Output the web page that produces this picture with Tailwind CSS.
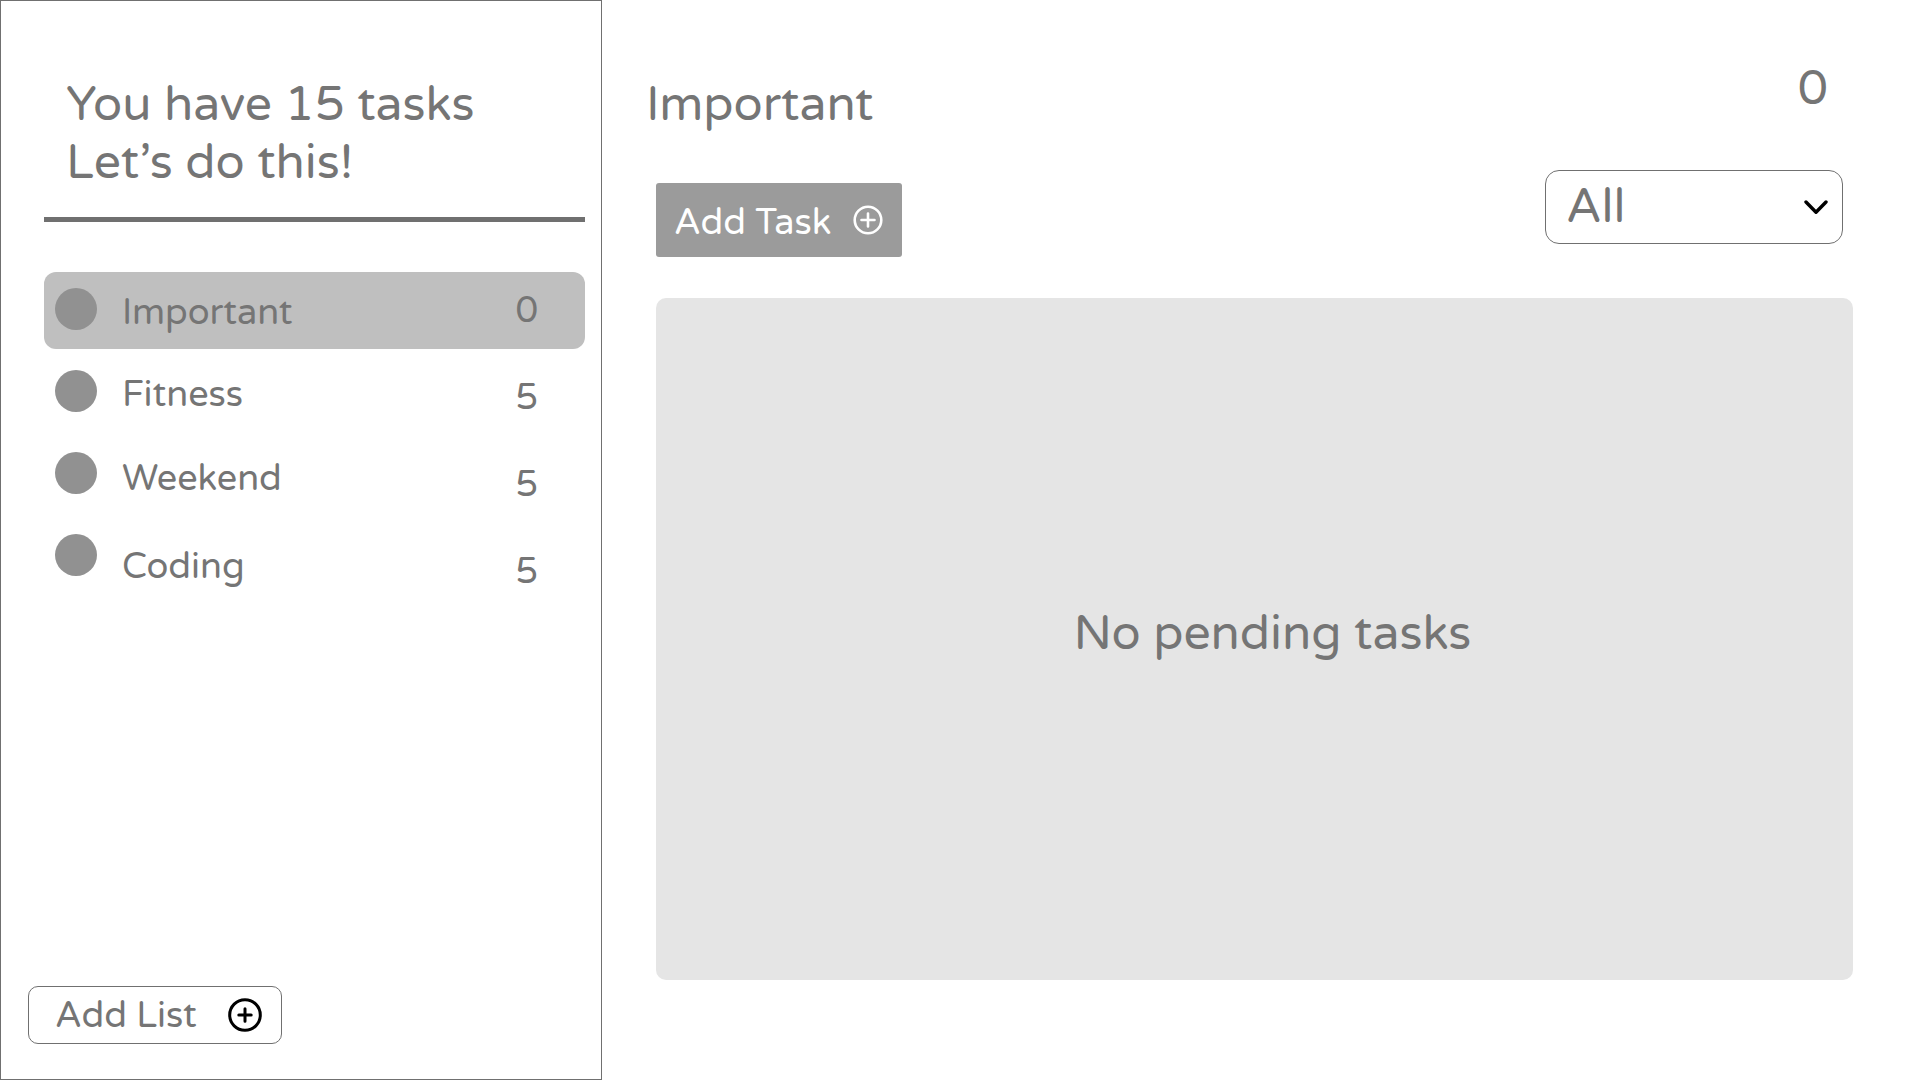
<!DOCTYPE html>
<html lang="en">
<head>
<meta charset="utf-8">
<meta name="viewport" content="width=device-width, initial-scale=1">
<title>Tasks</title>
<script src="https://cdn.jsdelivr.net/npm/@tailwindcss/browser@4"></script>
</head>
<body class="flex min-h-screen bg-white font-['Varela_Round','Noto_Sans',sans-serif] text-[#757575]">
  <aside class="flex w-[602px] shrink-0 flex-col border border-[#707070] pt-[75px] pb-[35px]">
    <p class="pl-[65px] text-5xl/[58px]">You have 15 tasks<br>Let’s do this!</p>
    <hr class="mt-[25px] mr-4 ml-[43px] h-[5px] border-0 bg-[#707070]">
    <ul class="mt-[50px] mr-4 ml-[43px] flex flex-col gap-[5px] text-4xl/[48px]">
      <li><a href="#important" class="flex h-[77px] items-start rounded-xl bg-[#bfbfbf] pr-[47px] pl-[11px]">
        <span class="mt-4 size-[42px] rounded-full bg-[#919191]"></span>
        <span class="ml-[25px] pt-[17px]">Important</span>
        <span class="ml-auto pt-[15px]">0</span>
      </a></li>
      <li><a href="#fitness" class="flex h-[77px] items-start pr-[47px] pl-[11px]">
        <span class="mt-4 size-[42px] rounded-full bg-[#919191]"></span>
        <span class="ml-[25px] pt-[17px]">Fitness</span>
        <span class="ml-auto pt-5">5</span>
      </a></li>
      <li><a href="#weekend" class="flex h-[77px] items-start pr-[47px] pl-[11px]">
        <span class="mt-4 size-[42px] rounded-full bg-[#919191]"></span>
        <span class="ml-[25px] pt-[19px]">Weekend</span>
        <span class="ml-auto pt-[25px]">5</span>
      </a></li>
      <li><a href="#coding" class="flex h-[77px] items-start pr-[47px] pl-[11px]">
        <span class="mt-4 size-[42px] rounded-full bg-[#919191]"></span>
        <span class="ml-[25px] pt-[25px]">Coding</span>
        <span class="ml-auto pt-[30px]">5</span>
      </a></li>
    </ul>
    <button type="button" class="mt-auto ml-[27px] flex h-[58px] w-[254px] items-center justify-between rounded-[10px] border border-[#707070] pr-[19px] pl-[26px] text-4xl/[48px]">
      <span class="pt-0.5">Add List</span>
      <svg class="size-[34px] text-black" viewBox="0 0 34 34" fill="none" stroke="currentColor" stroke-width="3" stroke-linecap="round" aria-hidden="true"><circle cx="17" cy="17" r="15.3"/><path d="M17 10.8v12.4M10.8 17h12.4"/></svg>
    </button>
  </aside>

  <main class="flex min-w-0 flex-1 flex-col pt-15 pb-[100px]">
    <header class="flex items-start justify-between pr-[92px] pl-11 text-5xl/[58px]">
      <h1 class="mt-4">Important</h1>
      <span>0</span>
    </header>
    <div class="mt-9 flex items-end justify-between pr-[77px] pl-[54px]">
      <button type="button" class="-mb-[13px] flex h-[74px] w-[246px] items-center justify-between rounded-[3px] bg-[#9b9b9b] pr-[19px] pl-[18px] text-4xl/[48px] text-white">
        <span class="pt-1.5">Add Task</span>
        <svg class="size-[30px]" viewBox="0 0 30 30" fill="none" stroke="currentColor" stroke-width="2.6" stroke-linecap="round" aria-hidden="true"><circle cx="15" cy="15" r="13.3"/><path d="M15 8.5v13M8.5 15h13"/></svg>
      </button>
      <div class="relative">
        <select aria-label="Filter tasks" class="h-[74px] w-[298px] appearance-none rounded-[14px] border border-[#707070] bg-transparent pl-5 text-5xl/[58px]">
          <option>All</option>
        </select>
        <svg class="pointer-events-none absolute top-[30px] right-[15px] h-[15px] w-6" viewBox="0 0 24 15" fill="none" stroke="#000" stroke-width="3.4" stroke-linecap="round" stroke-linejoin="round" aria-hidden="true"><path d="M2 2l10 10.2L22 2"/></svg>
      </div>
    </div>
    <section class="mt-[54px] mr-[67px] ml-[54px] flex flex-1 items-center justify-center rounded-[10px] bg-[#e5e5e5] pb-[11px] pl-9">
      <p class="text-5xl/[58px]">No pending tasks</p>
    </section>
  </main>
</body>
</html>
